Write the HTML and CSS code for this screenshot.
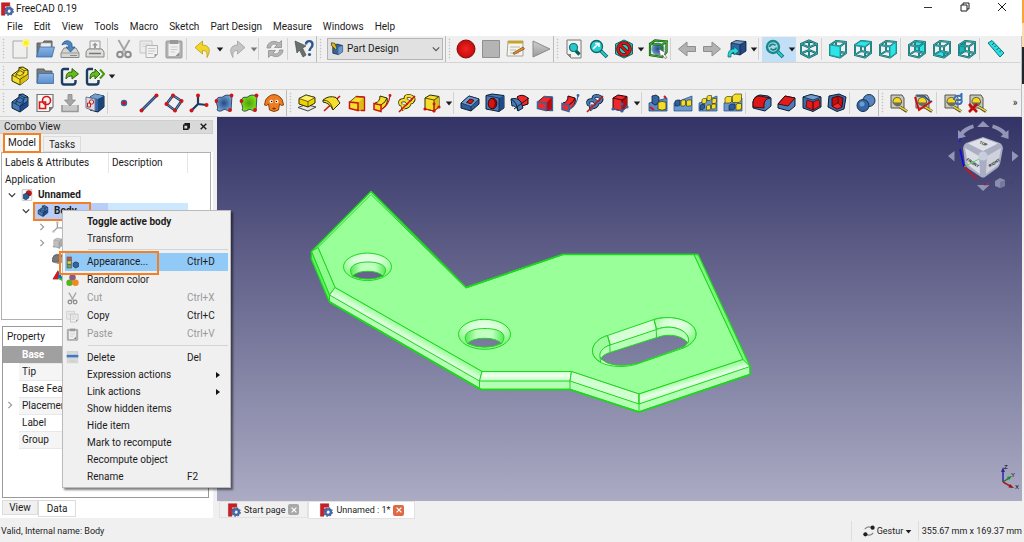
FILE: index.html
```html
<!DOCTYPE html>
<html lang="en">

<head>
  <meta charset="UTF-8">
  <meta name="viewport" content="width=device-width, initial-scale=1.0">
  <title>FreeCAD 0.19</title>
  <link rel="stylesheet" href="styles.css">
</head>

<body>
  <!-- Icon sprite -->
  <svg class="sprite" aria-hidden="true">
    <defs>
      <radialGradient id="g-red"><stop offset="0" stop-color="#f02424"/><stop offset="1" stop-color="#c80a0a"/></radialGradient>
      <linearGradient id="g-grey" x2="0" y2="1"><stop offset="0" stop-color="#d0d0d0"/><stop offset="1" stop-color="#9a9a9a"/></linearGradient>
      <linearGradient id="g-folder" x2="0" y2="1"><stop offset="0" stop-color="#8ab4e6"/><stop offset="1" stop-color="#5b8fcb"/></linearGradient>
      <radialGradient id="g-blue"><stop offset="0" stop-color="#204a87"/><stop offset="1" stop-color="#729fcf"/></radialGradient>
      <radialGradient id="g-green"><stop offset="0" stop-color="#4ea00a"/><stop offset="1" stop-color="#7ee01c"/></radialGradient>
    </defs>

    <symbol id="i-logo" viewBox="0 0 20 20">
      <path d="M2 1H14V6H7V8.500H11V13H7V19H2Z" fill="#cb1f24" stroke="#8e1014" stroke-width=".6"/>
      <circle cx="13" cy="13" r="4" fill="none" stroke="#4669a5" stroke-width="3.400"/>
      <circle cx="13" cy="13" r="5.800" fill="none" stroke="#4669a5" stroke-width="2" stroke-dasharray="2.300 2.255"/>
    </symbol>
    <symbol id="i-new" viewBox="0 0 20 20">
      <path d="M3 2H17V19H3Z" fill="#efefed" stroke="#a9aaa6"/>
      <circle cx="16" cy="4" r="4" fill="#fbf38c"/><circle cx="16" cy="4" r="2.200" fill="#ffee1c"/>
    </symbol>
    <symbol id="i-open" viewBox="0 0 20 20">
      <path d="M2 18L2 4H8L9 2H17V10" fill="#777" stroke="#5e5e5e"/>
      <path d="M6 4H16V10H5Z" fill="#eee" stroke="#999" stroke-width=".6"/>
      <path d="M4.500 8H19.500L17 18H1.500Z" fill="url(#g-folder)" stroke="#3d6da8" stroke-width=".8"/>
    </symbol>
    <symbol id="i-folder" viewBox="0 0 20 20">
      <path d="M2 17V3H9L10 5H17V9" fill="#7a7d80" stroke="#5d6063"/>
      <path d="M3.500 7.500H18.500V17.500H2Z" fill="url(#g-folder)" stroke="#3d6da8" stroke-width=".8"/>
    </symbol>
    <symbol id="i-save" viewBox="0 0 20 20">
      <path d="M4 9H16L19 14V18.500H1V14Z" fill="#d5d6d2" stroke="#888"/>
      <path d="M1 14H19" stroke="#999"/><path d="M10 16.500H17" stroke="#8a8a8a"/>
      <path d="M2 6C3 1 10 0 12 5V8H15L10.500 13L6 8H9C8.500 5 5 4 2 6Z" fill="#4b87c7" stroke="#29598f" stroke-width=".8"/>
    </symbol>
    <symbol id="i-print" viewBox="0 0 20 20">
      <path d="M5 2H15V10H5Z" fill="#f3f3f3" stroke="#999"/>
      <path d="M10 3.500L13 6.500H11V9H9V6.500H7Z" fill="#999"/>
      <path d="M3 10H17L19 13V18H1V13Z" fill="#dededb" stroke="#888"/><path d="M4 14.500H16" stroke="#777" stroke-width="1.500"/>
    </symbol>
    <symbol id="i-cut" viewBox="0 0 20 20">
      <path d="M4.500 1L11.500 13M15.500 1L8.500 13" stroke="#b9bab8" stroke-width="2.200" fill="none"/>
      <path d="M4.500 1L10 11M15.500 1L10 11" stroke="#8d8e8c" stroke-width=".7" fill="none"/>
      <circle cx="6" cy="15.500" r="2.800" fill="none" stroke="#8e8f8d" stroke-width="2"/>
      <circle cx="14" cy="15.500" r="2.800" fill="none" stroke="#8e8f8d" stroke-width="2"/>
    </symbol>
    <symbol id="i-copy" viewBox="0 0 20 20">
      <path d="M1 2H13V14H1Z" fill="#ececec" stroke="#c4c4c4"/><path d="M3 5H11M3 7.500H11" stroke="#d4d4d4"/>
      <path d="M7 6.500H18.500V15L15.500 18.500H7Z" fill="#f2f2f2" stroke="#b2b2b2"/>
      <path d="M9 9.500H16.500M9 12H16.500M9 14.500H14" stroke="#c8c8c8"/><path d="M15.500 18.500V15H18.500" fill="#999"/>
    </symbol>
    <symbol id="i-paste" viewBox="0 0 20 20">
      <rect x="2" y="2" width="16" height="17" rx="1" fill="#b2b2b2" stroke="#999"/>
      <path d="M4.500 4.500H15.500V17H4.500Z" fill="#f0f0f0"/><path d="M6 1H14V5H6Z" fill="#999"/>
      <path d="M6.500 8H13.500M6.500 10.500H13.500M6.500 13H11" stroke="#cdcdcd"/><path d="M15.500 13V17H11.500Z" fill="#909090"/>
    </symbol>
    <symbol id="i-undo" viewBox="0 0 20 20">
      <path d="M2 8.500L9.500 2V6C16 6 18.500 11 14 18.500C14.500 13 13.500 11.500 9.500 11.500V15Z" fill="var(--face)" stroke="var(--line)" stroke-width=".8" stroke-linejoin="round"/>
    </symbol>
    <symbol id="i-refresh" viewBox="0 0 20 20">
      <path d="M2 9C2 4 8 0 14 4L16.500 1.500V8.500H9.500L12 6C9 4 6 5.500 5.500 9Z" fill="#b4b4b4" stroke="#8f8f8f" stroke-width=".8"/>
      <path d="M18 11C18 16 12 20 6 16L3.500 18.500V11.500H10.500L8 14C11 16 14 14.500 14.500 11Z" fill="#b4b4b4" stroke="#8f8f8f" stroke-width=".8"/>
    </symbol>
    <symbol id="i-whats" viewBox="0 0 20 20">
      <path d="M1 2L12 7L8.500 9L12 16L9 18L5.500 11L3 14Z" fill="#6b716f" stroke="#474c4a" stroke-width=".7"/>
      <path d="M12 5.500C12 1 18.500 1 18.500 5.500C18.500 9 15.500 8.500 15.500 12" fill="none" stroke="#2b5791" stroke-width="2.400"/>
      <circle cx="15.500" cy="15.500" r="1.600" fill="#2b5791"/>
    </symbol>
    <symbol id="i-record" viewBox="0 0 20 20"><circle cx="10" cy="10" r="9" fill="url(#g-red)" stroke="#7e0c0c"/></symbol>
    <symbol id="i-stop" viewBox="0 0 20 20"><path d="M1.500 1.500H18.500V18.500H1.500Z" fill="#b4b4b4" stroke="#8f8f8f"/></symbol>
    <symbol id="i-note" viewBox="0 0 20 20">
      <path d="M2 2H17V17H1Z" fill="#f5f4ef" stroke="#a5a49c"/><path d="M2 2H17V4.500H2Z" fill="#c9a51c"/>
      <path d="M4 8H14M4 11H10M4 14H13" stroke="#b9b9b4"/>
      <path d="M7 14L17 8L18.500 10L8 15.500Z" fill="#f08a24" stroke="#6a4a1c" stroke-width=".7"/>
    </symbol>
    <symbol id="i-play" viewBox="0 0 20 20"><path d="M2 2L19 10L2 18Z" fill="url(#g-grey)" stroke="#8b8b8b"/></symbol>
    <symbol id="i-fitall" viewBox="0 0 20 20">
      <path d="M3 1H17V19H7L3 15Z" fill="#f3f3f1" stroke="#777"/><path d="M3 15H7V19Z" fill="#888"/>
      <path d="M11.500 11.500L15.500 15.500" stroke="#075b5d" stroke-width="3.200"/>
      <circle cx="9.500" cy="8.500" r="4" fill="#29c7ca" stroke="#0c7274" stroke-width="1.200"/>
    </symbol>
    <symbol id="i-zoomsel" viewBox="0 0 20 20">
      <path d="M11 11L18 18" stroke="#0b5d5f" stroke-width="3.600"/><path d="M12 12L17.500 17.500" stroke="#27c9cc" stroke-width="2"/>
      <circle cx="7.500" cy="7.500" r="6" fill="#2cced1" stroke="#0b6769" stroke-width="1.300"/>
      <path d="M4 10L9 5M6 4.500H10V8" stroke="#fff" stroke-width="1.500" fill="none"/>
    </symbol>
    <symbol id="i-sync" viewBox="0 0 20 20">
      <path d="M12 12L18 18" stroke="#0b7072" stroke-width="3.800"/><path d="M12.500 12.500L17.500 17.500" stroke="#27c9cc" stroke-width="2.200"/>
      <circle cx="8" cy="8" r="6" fill="#a5d8e6" stroke="#17898c" stroke-width="2.400"/>
      <path d="M4.500 8C5 5 9 4.500 10.500 6.500M11.500 8.500C10.500 11.500 7 11.500 5.500 9.500" stroke="#178083" stroke-width="1.600" fill="none"/>
    </symbol>
    <symbol id="i-nodraw" viewBox="0 0 20 20">
      <path d="M10 1L18.500 5V15L10 19L1.500 15V5Z" fill="#26c6c9" stroke="#0b6769"/>
      <circle cx="10" cy="10" r="6" fill="none" stroke="#5c0a0a" stroke-width="3.600"/><path d="M5.500 6L14.500 14" stroke="#5c0a0a" stroke-width="3.400"/>
      <circle cx="10" cy="10" r="6" fill="none" stroke="#d41818" stroke-width="2.200"/><path d="M5.500 6L14.500 14" stroke="#d41818" stroke-width="2"/>
    </symbol>
    <symbol id="i-bbox" viewBox="0 0 20 20">
      <circle cx="10" cy="10" r="6.500" fill="url(#g-blue)"/>
      <path d="M2 5L14 6V18L2 16Z M2 5L7 1.500L18.500 2.500L14 6M18.500 2.500V13L14 18" fill="none" stroke="#174f0e" stroke-width="2.200"/>
      <path d="M2 5L14 6V18L2 16Z M2 5L7 1.500L18.500 2.500L14 6M18.500 2.500V13L14 18" fill="none" stroke="#38b02c" stroke-width="1.100"/>
      <path d="M11 10L18 14L16 15L19 18.500L17 19.500L14.500 16L12.500 17.500Z" fill="#fff" stroke="#555" stroke-width=".6"/>
    </symbol>
    <symbol id="i-left" viewBox="0 0 20 20"><path d="M1.500 10L10 3V7.500H18.500V12.500H10V17Z" fill="#b2b2b2" stroke="#8e8e8e"/></symbol>
    <symbol id="i-right" viewBox="0 0 20 20"><path d="M18.500 10L10 3V7.500H1.500V12.500H10V17Z" fill="#b2b2b2" stroke="#8e8e8e"/></symbol>
    <symbol id="i-linkview" viewBox="0 0 20 20">
      <path d="M4 4L13 5.500V16L4 14Z" fill="#3465a4"/><path d="M4 4L9 1.500L19 2.500L13 5.500Z" fill="#729fcf"/><path d="M13 5.500L19 2.500V12L13 16Z" fill="#204a87"/>
      <path d="M4 14V4L9 1.500L19 2.500V12L13 16L4 14M4 4L13 5.500L19 2.500M13 5.500V16" fill="none" stroke="#0b1e33" stroke-width=".8"/>
      <path d="M1 18C1 12 3 10 7 10V7.500L12 12L7 16V13.500C4 13.500 4 15 4 18Z" fill="#2bd6d9" stroke="#075b5d" stroke-width=".7"/>
    </symbol>

    <!-- view cubes share one wire frame -->
    <symbol id="i-wire" viewBox="0 0 20 20">
      <g fill="none" stroke-linejoin="round">
        <path d="M2 6L12 7.500V18.500L2 16ZM2 6L8 2L18 3V14L12 18.500M12 7.500L18 3M8 2V12L2 16M8 12L18 14" stroke="#0f6062" stroke-width="2"/>
        <path d="M2 6L12 7.500V18.500L2 16ZM2 6L8 2L18 3V14L12 18.500M12 7.500L18 3M8 2V12L2 16M8 12L18 14" stroke="#3fb0b3" stroke-width=".9"/>
      </g>
    </symbol>
    <symbol id="i-front" viewBox="0 0 20 20"><use href="#i-wire"/><path d="M2 6L12 7.500V18.500L2 16Z" fill="#2fe3e6" stroke="#159fa2"/></symbol>
    <symbol id="i-top" viewBox="0 0 20 20"><use href="#i-wire"/><path d="M2 6L8 2L18 3L12 7.500Z" fill="#2fe3e6" stroke="#159fa2"/></symbol>
    <symbol id="i-rightview" viewBox="0 0 20 20"><use href="#i-wire"/><path d="M12 7.500L18 3V14L12 18.500Z" fill="#2fe3e6" stroke="#159fa2"/></symbol>
    <symbol id="i-rear" viewBox="0 0 20 20"><path d="M8 2L18 3V14L8 12Z" fill="#2fe3e6"/><use href="#i-wire"/></symbol>
    <symbol id="i-bottom" viewBox="0 0 20 20"><path d="M2 16L8 12L18 14L12 18.500Z" fill="#2fe3e6"/><use href="#i-wire"/></symbol>
    <symbol id="i-leftview" viewBox="0 0 20 20"><path d="M2 6L8 2V12L2 16Z" fill="#16b7ba"/><use href="#i-wire"/></symbol>
    <symbol id="i-iso" viewBox="0 0 20 20">
      <g fill="none" stroke-linejoin="round">
        <path d="M10 1.500L18 5V14.500L10 18.500L2 14.500V5ZM2 5L10 8.500L18 5M10 8.500V18.500M2 14.500L10 11L18 14.500M10 1.500V11" stroke="#0f6062" stroke-width="2"/>
        <path d="M10 1.500L18 5V14.500L10 18.500L2 14.500V5ZM2 5L10 8.500L18 5M10 8.500V18.500M2 14.500L10 11L18 14.500M10 1.500V11" stroke="#3fb0b3" stroke-width=".9"/>
      </g>
    </symbol>
    <symbol id="i-ruler" viewBox="0 0 20 20">
      <path d="M2 4L6 1.500L18 14L14 18Z" fill="#2edcdf" stroke="#0b7779"/><path d="M8 4L6 6M10 6.500L8.500 8M12.500 9L10.500 11M15 11.500L13.500 13" stroke="#0b6163"/>
    </symbol>

    <!-- solids: colours come from the add / sub classes -->
    <symbol id="i-stairs" viewBox="0 0 20 20">
      <path d="M2 9L9 4V1.500L13 1L18 4V13L10 19L2 15Z" fill="var(--face)" stroke="var(--line)"/>
      <path d="M10 12V19L18 13V8L14 10.500V7L10 12Z" fill="var(--shade)"/>
      <path d="M2 9L6 11V8L10 4.500M6 8L10 10L14 7L10 4.500M6 11L10 13.500V19M10 13.500L18 8M9 1.500L14 4.500L18 4M14 4.500V7" fill="none" stroke="var(--line)" stroke-width=".7"/>
    </symbol>
    <symbol id="i-link" viewBox="0 0 20 20">
      <path d="M9 3H4Q2 3 2 5V16Q2 18.500 4 18.500H13Q15.500 18.500 15.500 16V14" fill="none" stroke="#1c3c60" stroke-width="2.400"/>
      <path d="M6 13C6 7 8 6 12 6V2.500L18.500 8L12 13V10C9 10 8 10.500 6 13Z" fill="#63bd18" stroke="#24500a" stroke-width=".9"/>
    </symbol>
    <symbol id="i-links" viewBox="0 0 20 20">
      <path d="M8 3H4Q2 3 2 5V16Q2 18.500 4 18.500H11Q13.500 18.500 13.500 16V14" fill="none" stroke="#1c3c60" stroke-width="2.400"/>
      <path d="M5 13C5 7 7 6 10 6V3L15 8L10 13V10C8 10 7 10.500 5 13Z" fill="#63bd18" stroke="#24500a" stroke-width=".9"/>
      <path d="M15 3.500L19 8L15 12.500" fill="none" stroke="#4a9a10" stroke-width="2"/>
    </symbol>
    <symbol id="i-sketch" viewBox="0 0 20 20">
      <path d="M2 1.500H18V14L14 18.500H2Z" fill="#f6f6f4" stroke="#777" stroke-width="1.200"/><path d="M14 18.500V14H18Z" fill="#777"/>
      <circle cx="11.500" cy="7.500" r="4" fill="none" stroke="#d81616" stroke-width="1.600"/><path d="M4.500 9H10.500V15.500H4.500Z" fill="none" stroke="#d81616" stroke-width="1.600"/>
    </symbol>
    <symbol id="i-import" viewBox="0 0 20 20">
      <path d="M2 12V18.500H18V12" fill="#c9c9c9" stroke="#999" stroke-width="1.600"/>
      <path d="M8 1.500H12V7H15.500L10 13L4.500 7H8Z" fill="#a6a6a6" stroke="#8a8a8a" stroke-width=".8"/>
    </symbol>
    <symbol id="i-mapsketch" viewBox="0 0 20 20">
      <path d="M5 4L10 1L19 3V14L13 19L5 17Z" fill="#3465a4" stroke="#0b1e33"/><path d="M5 4L10 1L19 3L13 6Z" fill="#729fcf"/><path d="M13 6L19 3V14L13 19Z" fill="#1d4478"/>
      <path d="M1 4L10 6V18L1 15Z" fill="#d8dde6" stroke="#6b7b93"/>
      <circle cx="6.500" cy="9" r="2.200" fill="none" stroke="#d81616"/><path d="M2.500 10H5.500V14H2.500Z" fill="none" stroke="#d81616"/>
    </symbol>
    <symbol id="i-point" viewBox="0 0 20 20"><circle cx="10" cy="10" r="3.200" fill="#3465a4"/><circle cx="10" cy="10" r="1.900" fill="#d41414"/></symbol>
    <symbol id="i-line" viewBox="0 0 20 20">
      <path d="M2.500 17.500L17.500 2.500" stroke="#132c4b" stroke-width="2.600"/><path d="M2.500 17.500L17.500 2.500" stroke="#4c7db8" stroke-width="1.200"/>
      <circle cx="2.500" cy="17.500" r="2" fill="#d41414"/><circle cx="17.500" cy="2.500" r="2" fill="#d41414"/>
    </symbol>
    <symbol id="i-plane" viewBox="0 0 20 20">
      <path d="M2.500 11L9 2.500L17.500 8L11 17.500Z" fill="none" stroke="#132c4b" stroke-width="2.600"/><path d="M2.500 11L9 2.500L17.500 8L11 17.500Z" fill="none" stroke="#5c8cc4" stroke-width="1.200"/>
      <g fill="#d41414"><circle cx="2.500" cy="11" r="2"/><circle cx="9" cy="2.500" r="2"/><circle cx="17.500" cy="8" r="2"/><circle cx="11" cy="17.500" r="2"/></g>
    </symbol>
    <symbol id="i-cs" viewBox="0 0 20 20">
      <path d="M9 2.500V11L2.500 17.500M9 11L17.500 12" fill="none" stroke="var(--line)" stroke-width="2.200"/>
      <g fill="var(--face)"><circle cx="9" cy="2.500" r="2"/><circle cx="2.500" cy="17.500" r="2"/><circle cx="17.500" cy="12" r="2"/></g>
    </symbol>
    <symbol id="i-binder" viewBox="0 0 20 20">
      <path d="M2 7C5 2 7 6 10 3C13 1 15 3 18 2L17 18C13 19 12 15 9 17C6 19 4 18 3 17C5 13 1 10 2 7Z" fill="var(--face)" stroke="#173052" stroke-width=".8"/>
      <g fill="#d41414"><circle cx="17.500" cy="2.500" r="1.900"/><circle cx="2.500" cy="8" r="1.900"/><circle cx="16" cy="17" r="1.900"/></g>
    </symbol>
    <symbol id="i-clone" viewBox="0 0 20 20">
      <path d="M4 4Q10 -1 16 4Q19 6 19.500 12Q17.500 13.500 15.500 11L14.500 17Q10 20 5.500 17L4.500 11Q2.500 13.500 .5 12Q1 6 4 4Z" fill="#ee7d20" stroke="#7c3905" stroke-width=".9"/>
      <circle cx="7.300" cy="8.500" r="1.700" fill="#fff"/><circle cx="12.700" cy="8.500" r="1.700" fill="#fff"/><circle cx="7.600" cy="8.500" r=".8"/><circle cx="12.400" cy="8.500" r=".8"/>
      <path d="M8 15.500Q10 17.500 12 15.500L10 14.500Z" fill="#71320a"/>
    </symbol>
    <symbol id="i-pad" viewBox="0 0 20 20">
      <path d="M1 14.500L9 11.500L19 14L11 18Z" fill="#e6e6e6" stroke="#444"/>
      <path d="M2 5.500L9 2L18 4.500V10L11 14L2 11Z" fill="#edd400" stroke="#302b00"/><path d="M2 5.500L9 2L18 4.500L11 8.500Z" fill="#fdf06a" stroke="#302b00" stroke-width=".7"/><path d="M11 8.500V14" stroke="#302b00" stroke-width=".7"/>
    </symbol>
    <symbol id="i-revolve" viewBox="0 0 20 20">
      <path d="M2 18L18 3" stroke="#cc1212" stroke-width="1.600"/>
      <path d="M1 7Q7 2 14 4.500L18 10L11 17Q8 10 1 9Z" fill="var(--face)" stroke="var(--line)"/><path d="M1 7Q9 7 11 17" fill="none" stroke="var(--line)" stroke-width=".8"/>
    </symbol>
    <symbol id="i-groove" viewBox="0 0 20 20">
      <path d="M7 4Q12 0 18 5L18 11L12 13Z" fill="#ef2929" stroke="#280000"/>
      <path d="M1 6Q7 4 11 9L13 15L8 18Q6 12 2 13Z" fill="#4c7db8" stroke="#0b1e33"/><path d="M1 6Q7 9 8 18M4 16L19 5" fill="none" stroke="#0b1e33"/>
    </symbol>
    <symbol id="i-loft" viewBox="0 0 20 20">
      <path d="M2.500 9L9 3.500L17 4V17.500L11 17.500Z" fill="var(--face)" stroke="var(--line)" stroke-width=".8"/><path d="M11 10L17 4V17.500H11Z" fill="var(--shade)"/>
      <path d="M2.500 9L11 10V17.500L2.500 15.500Z" fill="var(--face)" stroke="var(--edge)" stroke-width="1.500"/><path d="M9 3.500L17.500 4V17.500H14" fill="none" stroke="var(--edge)" stroke-width="1.300"/>
    </symbol>
    <symbol id="i-pipe" viewBox="0 0 20 20">
      <path d="M3 10Q8 9 8 3L15 5Q17 11 9 17Z" fill="var(--face)" stroke="var(--line)"/><path d="M9 12Q14 9 15 5" fill="none" stroke="var(--line)"/>
      <path d="M2 10.500L9 12V18.500L2 16.500Z" fill="var(--face)" stroke="var(--edge)" stroke-width="1.500"/>
      <path d="M10 16Q17 12 18 2.500" fill="none" stroke="var(--edge)" stroke-width="1.200"/><circle cx="18" cy="2.500" r="1.400" fill="var(--edge)"/>
    </symbol>
    <symbol id="i-helix" viewBox="0 0 20 20">
      <path d="M4 12Q1 7 8 7Q15 9 11 13Q6 16 5 12M9 8Q7 2 13 3Q19 5 15 9Q11 11 9 8M7 17Q4 14 8 13" fill="none" stroke="var(--line)" stroke-width="3.800"/>
      <path d="M4 12Q1 7 8 7Q15 9 11 13Q6 16 5 12M9 8Q7 2 13 3Q19 5 15 9Q11 11 9 8M7 17Q4 14 8 13" fill="none" stroke="var(--face)" stroke-width="2.400"/>
      <path d="M2 19L18 3" stroke="#cc1212" stroke-width="1.600"/>
    </symbol>
    <symbol id="i-box" viewBox="0 0 20 20">
      <path d="M3 5L8 2L17 3.500V14L12 18L3 16Z" fill="var(--face)" stroke="var(--line)"/><path d="M12 7L17 3.500V14L12 18Z" fill="var(--shade)"/>
      <path d="M3 5L12 7L17 3.500M12 7V18" fill="none" stroke="var(--line)" stroke-width=".8"/><path d="M3 16L12 18L17 14M12 12V18" stroke="var(--edge)" fill="none"/>
      <g fill="var(--edge)"><circle cx="3" cy="16" r="1.600"/><circle cx="12" cy="18" r="1.600"/><circle cx="17" cy="14" r="1.600"/><circle cx="12" cy="11" r="1.400"/></g>
    </symbol>
    <symbol id="i-pocket" viewBox="0 0 20 20">
      <path d="M1 10L9 3L19 6V11L11 18L1 15Z" fill="#2f5d9b" stroke="#0b1e33"/><path d="M1 10L9 3L19 6L11 13.500Z" fill="#6d9bd0" stroke="#0b1e33" stroke-width=".7"/>
      <path d="M6.500 9.500L10 6L14 7.200L11 10.800Z" fill="#d41414" stroke="#280000" stroke-width=".8"/><path d="M11 13.500V18" stroke="#0b1e33" stroke-width=".7"/>
    </symbol>
    <symbol id="i-hole" viewBox="0 0 20 20">
      <path d="M1 2.500L7 1L19 2.500V15L14 18.500L1 16Z" fill="#4779b6" stroke="#0b1e33"/><path d="M14 5L19 2.500V15L14 18.500Z" fill="#204a87"/><path d="M1 2.500L14 5V18.500" fill="none" stroke="#0b1e33" stroke-width=".7"/>
      <ellipse cx="7.500" cy="10.500" rx="4.300" ry="5.300" fill="#d41414" stroke="#280000"/><path d="M7 5.500Q12 9 8 15.500Q12 14 11.500 10Q10.500 6 7 5.500Z" fill="#7c0505"/>
    </symbol>
    <symbol id="i-mirror" viewBox="0 0 20 20">
      <path d="M1 10L19 5V18H1Z" fill="#5b8ac2" stroke="#204a87" stroke-width=".8"/><path d="M4 3L8 2L11 4V10L7 12L4 10Z" fill="#3465a4" stroke="#0b1e33" stroke-width=".8"/>
      <path d="M2 14L6 17M16 3L18 5" stroke="#d41414" stroke-width="2"/><path d="M10 9.500Q14 7 18 9.500V16Q14 18.500 10 16Z" fill="#f3dc2a" stroke="#302b00" stroke-width=".7"/>
    </symbol>
    <symbol id="i-linear" viewBox="0 0 20 20">
      <path d="M1 10L19 3V18H1Z" fill="#6b98cf" stroke="#204a87" stroke-width=".7"/><path d="M2 8L4 7H7V12L5.500 13H2Z" fill="#2f5d9b" stroke="#0b1e33" stroke-width=".6"/>
      <path d="M8 8L9.500 7H12.500V12L11 13H8ZM13.500 8L15 7H18.500V12L17 13H13.500Z" fill="#f3dc2a" stroke="#302b00" stroke-width=".6"/>
    </symbol>
    <symbol id="i-polar" viewBox="0 0 20 20">
      <path d="M1 10L19 3V18H1Z" fill="#6b98cf" stroke="#204a87" stroke-width=".7"/><path d="M2 12.500L3.500 11.500H6.500V15L5 16.500H2Z" fill="#2f5d9b" stroke="#0b1e33" stroke-width=".6"/>
      <path d="M4 6.500L5.500 5.500H8.500V9L7 10.500H4ZM9 3.500L10.500 2.500H13.500V6L12 7.500H9ZM14 6.500L15.500 5.500H18.500V9L17 10.500H14ZM13.500 12L15 11H18V14.500L16.500 16H13.500ZM8.500 13L10 12H12.500V15.500L11.500 17H8.500Z" fill="#f3dc2a" stroke="#302b00" stroke-width=".6"/>
    </symbol>
    <symbol id="i-multi" viewBox="0 0 20 20">
      <path d="M1 10L19 5V18H1Z" fill="#6b98cf" stroke="#204a87" stroke-width=".7"/><path d="M6 12.500L8 11H12V15.500L10 17H6Z" fill="#2f5d9b" stroke="#0b1e33" stroke-width=".6"/>
      <path d="M2 5L4 3.500H8.500V8.500L7 10H2ZM9.500 3L12 1H18.500V7L16 9.500H9.500ZM13 12L14.500 10.500H18.500V15L17 17H13Z" fill="#f3dc2a" stroke="#302b00" stroke-width=".6"/>
    </symbol>
    <symbol id="i-fillet" viewBox="0 0 20 20">
      <path d="M1 9Q2 3 8 2L16 3L19 5V13L13 18L1 15Z" fill="#4c7db8" stroke="#0b1e33"/><path d="M1 9Q2 3 8 3L18 5Q12 6 12 12V15L1 14Z" fill="#de1616" stroke="#280000" stroke-width=".8"/>
    </symbol>
    <symbol id="i-chamfer" viewBox="0 0 20 20">
      <path d="M1 11L8 3L18 5V13L12 18L1 15Z" fill="#4c7db8" stroke="#0b1e33"/><path d="M1 11L8 3L18 5L11 13Z" fill="#e31b1b" stroke="#280000" stroke-width=".8"/>
    </symbol>
    <symbol id="i-draft" viewBox="0 0 20 20">
      <path d="M1 4L9 1.500L19 4V14L11 18.500L1 15Z" fill="#3c6cab" stroke="#0b1e33"/><path d="M1 4L9 1.500L19 4L11 7Z" fill="#729fcf" stroke="#0b1e33" stroke-width=".7"/>
      <path d="M5 7L11 9V17L4 14ZM11 9L17 6.500L18 13L11 17Z" fill="#e31b1b" stroke="#500" stroke-width=".7"/>
    </symbol>
    <symbol id="i-shell" viewBox="0 0 20 20">
      <path d="M2 3L12 1L19 4L17 16L10 18.500L1 14Z" fill="#3c6cab" stroke="#0b1e33"/><path d="M5 5L11 3L16 5L15 14L10 16L5 13Z" fill="#c01010" stroke="#280000" stroke-width=".8"/><path d="M5 13L11 10L15 14L10 16ZM11 3V10" fill="#ef2929" stroke="#500" stroke-width=".7"/>
    </symbol>
    <symbol id="i-boolean" viewBox="0 0 20 20"><circle cx="13" cy="7.500" r="6" fill="#5685bf" stroke="#173052"/><circle cx="7" cy="12.500" r="6" fill="#3465a4" stroke="#173052"/><circle cx="6" cy="11" r="2.500" fill="#6c9bd2"/></symbol>
    <symbol id="i-tape" viewBox="0 0 20 20">
      <path d="M2 2H13L15 5V15H2Z" fill="#c9c8bb" stroke="#55554f"/><path d="M4 8A4.300 4.300 0 0 1 12.500 8V10H4Z" fill="#f3d81f" stroke="#444" stroke-width=".8"/><path d="M4 10H12.500Q12 13.500 8 13.500Q5 13 4 10Z" fill="#6c6c60"/>
      <path d="M11 14L18 18.500" stroke="#43432a" stroke-width="3"/><path d="M11 14L18 18" stroke="#e6cf2d" stroke-width="1.500"/>
    </symbol>
    <symbol id="i-tape-tick" viewBox="0 0 20 20"><use href="#i-tape"/><path d="M1 4L5 17L18 8" fill="none" stroke="#cf1111" stroke-width="2"/><path d="M3 3H10L17 9" fill="none" stroke="#1f4c8f" stroke-width="1.500"/></symbol>
    <symbol id="i-tape-ref" viewBox="0 0 20 20"><use href="#i-tape"/><path d="M11 7Q11 2 17 3L18.500 1V7H13M19 8Q18 13 12 10" fill="none" stroke="#3a72b8" stroke-width="2"/></symbol>
    <symbol id="i-tape-x" viewBox="0 0 20 20"><use href="#i-tape"/><path d="M1 11L9 19M9 11L1 19" stroke="#c40d0d" stroke-width="2.600"/></symbol>
    <symbol id="i-workbench" viewBox="0 0 20 20">
      <path d="M4 6L10 3L18 5V14L12 18L4 16Z" fill="#3465a4" stroke="#0b1e33"/><path d="M12 8L18 5V14L12 18Z" fill="#6b98cf"/>
      <path d="M2 1L7 2L10 9L8 11L2 5Z" fill="#d9b51a" stroke="#3d3300"/>
    </symbol>
    <symbol id="i-doc" viewBox="0 0 20 20">
      <path d="M2 1H18V19H2Z" fill="#fafafa" stroke="#aaa"/><circle cx="13" cy="7" r="5" fill="#c01515"/><path d="M4 9L9 7L13 9V15L8 18L4 16Z" fill="#2d5c9c" stroke="#0b1e33"/>
    </symbol>
    <symbol id="i-appearance" viewBox="0 0 20 20">
      <path d="M1 1H9V19H1Z" fill="#666"/><path d="M2.500 2.500H7.500V6H2.500Z" fill="#e24a2f"/><path d="M2.500 8H7.500V12H2.500Z" fill="#e6cf2d"/><path d="M2.500 14H7.500V17.500H2.500Z" fill="#59b548"/>
      <path d="M11 11L15 9L19.500 11V16L15 18.500L11 16Z" fill="#34659f" stroke="#12294a"/>
    </symbol>
    <symbol id="i-balls" viewBox="0 0 20 20"><circle cx="10" cy="5.500" r="5" fill="#8a5a8c"/><circle cx="5.500" cy="13.500" r="5" fill="#5bb022"/><circle cx="14.500" cy="13.500" r="5" fill="#ef8a1d"/></symbol>
    <symbol id="i-delete" viewBox="0 0 20 20">
      <path d="M2 1H18V6H2Z" fill="#d9d9d9" stroke="#b0b0b0" stroke-width=".7"/><path d="M1 6H19V10H1Z" fill="#3e79c4"/><path d="M2 11H18V18H2Z" fill="#e2e2e2" stroke="#b5b5b5" stroke-width=".7"/><path d="M4 14H16M4 16H16" stroke="#c4c4c4"/>
    </symbol>
    <symbol id="i-nav" viewBox="0 0 20 20">
      <path d="M3 7Q7 1 14 4M17 13Q13 19 6 16" fill="none" stroke="#888" stroke-width="2"/>
      <circle cx="16" cy="4.500" r="3.500" fill="#1c2226"/><circle cx="4" cy="15.500" r="3.500" fill="#1c2226"/>
    </symbol>
    <symbol id="i-down" viewBox="0 0 10 10"><path d="M1 3H9L5 8Z" fill="currentColor"/></symbol>
    <symbol id="i-chev" viewBox="0 0 10 10"><path d="M1 3L5 7L9 3" fill="none" stroke="currentColor" stroke-width="1.500"/></symbol>
    <symbol id="i-x" viewBox="0 0 10 10"><path d="M1 1L9 9M9 1L1 9" fill="none" stroke="currentColor" stroke-width="var(--w, 1)"/></symbol>
    <symbol id="i-restore" viewBox="0 0 10 10"><path d="M1 3H7V9H1ZM3 3V1H9V7H7" fill="none" stroke="currentColor" stroke-width="var(--w, 1)"/></symbol>
  </svg>

  <div class="window">
    <header class="titlebar">
      <svg class="logo"><use href="#i-logo"/></svg>
      <h1>FreeCAD 0.19</h1>
      <button aria-label="Minimize"><svg viewBox="0 0 10 10"><path d="M1 5.500H9" stroke="#333"/></svg></button>
      <button aria-label="Restore"><svg><use href="#i-restore"/></svg></button>
      <button aria-label="Close"><svg><use href="#i-x"/></svg></button>
    </header>

    <nav class="menubar">
      <button>File</button>
      <button>Edit</button>
      <button>View</button>
      <button>Tools</button>
      <button>Macro</button>
      <button>Sketch</button>
      <button>Part Design</button>
      <button>Measure</button>
      <button>Windows</button>
      <button>Help</button>
    </nav>

    <div class="toolbar-row">
      <div class="toolbar">
        <button aria-label="New"><svg><use href="#i-new"/></svg></button>
        <button aria-label="Open"><svg><use href="#i-open"/></svg></button>
        <button aria-label="Save"><svg><use href="#i-save"/></svg></button>
        <button aria-label="Print"><svg><use href="#i-print"/></svg></button>
        <span class="sep"></span>
        <button aria-label="Cut"><svg><use href="#i-cut"/></svg></button>
        <button aria-label="Copy"><svg><use href="#i-copy"/></svg></button>
        <button aria-label="Paste"><svg><use href="#i-paste"/></svg></button>
        <span class="sep"></span>
        <button class="undo" aria-label="Undo"><svg><use href="#i-undo"/></svg></button>
        <button class="more" aria-label="Undo list"><svg><use href="#i-down"/></svg></button>
        <button class="redo" aria-label="Redo"><svg><use href="#i-undo"/></svg></button>
        <button class="more off" aria-label="Redo list"><svg><use href="#i-down"/></svg></button>
        <span class="sep"></span>
        <button aria-label="Refresh"><svg><use href="#i-refresh"/></svg></button>
        <span class="sep"></span>
        <button aria-label="What's this?"><svg><use href="#i-whats"/></svg></button>
      </div>
      <div class="toolbar">
        <div class="workbench">
          <svg class="workbench-icon"><use href="#i-workbench"/></svg>
          <select aria-label="Workbench">
            <option>Part Design</option>
          </select>
          <svg class="workbench-arrow"><use href="#i-chev"/></svg>
        </div>
      </div>
      <div class="toolbar">
        <button aria-label="Record macro"><svg><use href="#i-record"/></svg></button>
        <button aria-label="Stop macro"><svg><use href="#i-stop"/></svg></button>
        <button aria-label="Macros"><svg><use href="#i-note"/></svg></button>
        <button aria-label="Execute macro"><svg><use href="#i-play"/></svg></button>
      </div>
      <div class="toolbar last">
        <button aria-label="Fit all"><svg><use href="#i-fitall"/></svg></button>
        <button aria-label="Fit selection"><svg><use href="#i-zoomsel"/></svg></button>
        <button aria-label="Draw style"><svg><use href="#i-nodraw"/></svg></button>
        <button class="more" aria-label="Draw styles"><svg><use href="#i-down"/></svg></button>
        <button aria-label="Bounding box"><svg><use href="#i-bbox"/></svg></button>
        <span class="sep"></span>
        <button aria-label="Back"><svg><use href="#i-left"/></svg></button>
        <button aria-label="Forward"><svg><use href="#i-right"/></svg></button>
        <button aria-label="Go to linked object"><svg><use href="#i-linkview"/></svg></button>
        <button class="more" aria-label="Link navigation"><svg><use href="#i-down"/></svg></button>
        <span class="sep"></span>
        <button class="active" aria-label="Sync view"><svg><use href="#i-sync"/></svg></button>
        <button class="more active" aria-label="Sync options"><svg><use href="#i-down"/></svg></button>
        <button aria-label="Isometric"><svg><use href="#i-iso"/></svg></button>
        <span class="sep"></span>
        <button aria-label="Front"><svg><use href="#i-front"/></svg></button>
        <button aria-label="Top"><svg><use href="#i-top"/></svg></button>
        <button aria-label="Right"><svg><use href="#i-rightview"/></svg></button>
        <span class="sep"></span>
        <button aria-label="Rear"><svg><use href="#i-rear"/></svg></button>
        <button aria-label="Bottom"><svg><use href="#i-bottom"/></svg></button>
        <button aria-label="Left"><svg><use href="#i-leftview"/></svg></button>
        <span class="sep"></span>
        <button aria-label="Measure distance"><svg><use href="#i-ruler"/></svg></button>
      </div>
    </div>

    <div class="toolbar-row">
      <div class="toolbar last">
        <button class="add" aria-label="Create part"><svg><use href="#i-stairs"/></svg></button>
        <button aria-label="Create group"><svg><use href="#i-folder"/></svg></button>
        <button aria-label="Make link"><svg><use href="#i-link"/></svg></button>
        <button aria-label="Link actions"><svg><use href="#i-links"/></svg></button>
        <button class="more" aria-label="More link actions"><svg><use href="#i-down"/></svg></button>
      </div>
    </div>

    <div class="toolbar-row">
      <div class="toolbar">
        <button class="blue" aria-label="Create body"><svg><use href="#i-stairs"/></svg></button>
        <button aria-label="Create sketch"><svg><use href="#i-sketch"/></svg></button>
        <button aria-label="Edit sketch"><svg><use href="#i-import"/></svg></button>
        <button aria-label="Map sketch to face"><svg><use href="#i-mapsketch"/></svg></button>
        <span class="sep"></span>
        <button aria-label="Datum point"><svg><use href="#i-point"/></svg></button>
        <button aria-label="Datum line"><svg><use href="#i-line"/></svg></button>
        <button aria-label="Datum plane"><svg><use href="#i-plane"/></svg></button>
        <button class="cs" aria-label="Coordinate system"><svg><use href="#i-cs"/></svg></button>
        <button class="binder" aria-label="Shape binder"><svg><use href="#i-binder"/></svg></button>
        <button class="subbinder" aria-label="Sub-shape binder"><svg><use href="#i-binder"/></svg></button>
        <button aria-label="Clone"><svg><use href="#i-clone"/></svg></button>
      </div>
      <div class="toolbar">
        <button class="add" aria-label="Pad"><svg><use href="#i-pad"/></svg></button>
        <button class="add" aria-label="Revolution"><svg><use href="#i-revolve"/></svg></button>
        <button class="add" aria-label="Additive loft"><svg><use href="#i-loft"/></svg></button>
        <button class="add" aria-label="Additive pipe"><svg><use href="#i-pipe"/></svg></button>
        <button class="add" aria-label="Additive helix"><svg><use href="#i-helix"/></svg></button>
        <button class="add" aria-label="Additive box"><svg><use href="#i-box"/></svg></button>
        <button class="more" aria-label="Additive primitives"><svg><use href="#i-down"/></svg></button>
        <span class="sep"></span>
        <button aria-label="Pocket"><svg><use href="#i-pocket"/></svg></button>
        <button aria-label="Hole"><svg><use href="#i-hole"/></svg></button>
        <button aria-label="Groove"><svg><use href="#i-groove"/></svg></button>
        <button class="sub" aria-label="Subtractive loft"><svg><use href="#i-loft"/></svg></button>
        <button class="sub" aria-label="Subtractive pipe"><svg><use href="#i-pipe"/></svg></button>
        <button class="blue" aria-label="Subtractive helix"><svg><use href="#i-helix"/></svg></button>
        <button class="sub" aria-label="Subtractive box"><svg><use href="#i-box"/></svg></button>
        <button class="more" aria-label="Subtractive primitives"><svg><use href="#i-down"/></svg></button>
        <span class="sep"></span>
        <button aria-label="Mirrored"><svg><use href="#i-mirror"/></svg></button>
        <button aria-label="Linear pattern"><svg><use href="#i-linear"/></svg></button>
        <button aria-label="Polar pattern"><svg><use href="#i-polar"/></svg></button>
        <button aria-label="MultiTransform"><svg><use href="#i-multi"/></svg></button>
        <span class="sep"></span>
        <button aria-label="Fillet"><svg><use href="#i-fillet"/></svg></button>
        <button aria-label="Chamfer"><svg><use href="#i-chamfer"/></svg></button>
        <button aria-label="Draft"><svg><use href="#i-draft"/></svg></button>
        <button aria-label="Thickness"><svg><use href="#i-shell"/></svg></button>
        <span class="sep"></span>
        <button aria-label="Boolean"><svg><use href="#i-boolean"/></svg></button>
      </div>
      <div class="toolbar last">
        <button aria-label="Measure linear"><svg><use href="#i-tape"/></svg></button>
        <button aria-label="Measure angular"><svg><use href="#i-tape-tick"/></svg></button>
        <span class="sep"></span>
        <button aria-label="Refresh measurement"><svg><use href="#i-tape-ref"/></svg></button>
        <button aria-label="Clear measurement"><svg><use href="#i-tape-x"/></svg></button>
        <button class="overflow" aria-label="More tools">»</button>
      </div>
    </div>

    <main class="workspace">
      <aside class="combo">
        <div class="dock-title">
          <h2>Combo View</h2>
          <button aria-label="Float"><svg><use href="#i-restore"/></svg></button>
          <button aria-label="Close panel"><svg><use href="#i-x"/></svg></button>
        </div>
        <div class="tabs tabs-top">
          <button class="tab selected marked">Model</button>
          <button class="tab">Tasks</button>
        </div>

        <div class="combo-page">
          <div class="tree">
            <div class="tree-head"><span>Labels &amp; Attributes</span><span>Description</span></div>
            <div class="tree-row root">Application</div>
            <div class="tree-row level-1"><svg class="fold"><use href="#i-chev"/></svg><svg><use href="#i-doc"/></svg><b>Unnamed</b></div>
            <div class="tree-row level-2 picked"><svg class="fold"><use href="#i-chev"/></svg>
              <div class="picked-item blue marked"><svg><use href="#i-stairs"/></svg><b>Body</b></div>
            </div>
            <div class="tree-row level-3"><svg class="fold shut"><use href="#i-chev"/></svg><svg class="dim"><use href="#i-cs"/></svg></div>
            <div class="tree-row level-3"><svg class="fold shut"><use href="#i-chev"/></svg><svg class="dim"><use href="#i-box"/></svg></div>
            <div class="tree-row level-3"><span class="fold"></span><svg class="dim"><use href="#i-fillet"/></svg></div>
            <div class="tree-row level-3"><span class="fold"></span><svg viewBox="0 0 20 20"><path d="M1 17L10 2L19 17Z" fill="#2460c4"/><path d="M1 17L10 2L10 17Z" fill="#dd1717"/><path d="M11 15L18 19" stroke="#22cc22" stroke-width="3"/></svg></div>
          </div>

          <div class="props">
            <table>
              <thead>
                <tr><th colspan="2">Property</th></tr>
              </thead>
              <tbody>
                <tr class="group"><td></td><td>Base</td></tr>
                <tr><td></td><td>Tip</td></tr>
                <tr><td></td><td>Base Feature</td></tr>
                <tr><td><svg class="fold shut"><use href="#i-chev"/></svg></td><td>Placement</td></tr>
                <tr><td></td><td>Label</td></tr>
                <tr><td></td><td>Group</td></tr>
              </tbody>
            </table>
          </div>

          <div class="tabs tabs-bottom">
            <button class="tab">View</button>
            <button class="tab selected">Data</button>
          </div>
        </div>
      </aside>

      <section class="document">
        <!-- 3D view: part, navigation cube and axis cross -->
        <svg class="view3d" viewBox="217 117 805 384" preserveAspectRatio="xMidYMid meet">
          <defs>
            <linearGradient id="bevel" gradientUnits="userSpaceOnUse" x1="400" y1="325" x2="393" y2="337"><stop offset="0" stop-color="#9cff9c"/><stop offset=".5" stop-color="#dcffdc"/><stop offset="1" stop-color="#baffba"/></linearGradient>
            <linearGradient id="bevel-flat" x2="0" y2="1"><stop offset="0" stop-color="#c4ffc4"/><stop offset=".4" stop-color="#f2fff2"/><stop offset="1" stop-color="#baffba"/></linearGradient>
            <linearGradient id="bevel-r" gradientUnits="userSpaceOnUse" x1="694" y1="377" x2="697" y2="387"><stop offset="0" stop-color="#a8ffa8"/><stop offset=".5" stop-color="#e8ffe8"/><stop offset="1" stop-color="#baffba"/></linearGradient>
            <radialGradient id="rim" cx=".5" cy=".3" r=".6"><stop offset="0" stop-color="#eaffea"/><stop offset=".5" stop-color="#d2ffd2"/><stop offset="1" stop-color="#86f886"/></radialGradient>
            <linearGradient id="bore"><stop offset="0" stop-color="#54e854"/><stop offset=".3" stop-color="#c0ffc0"/><stop offset=".7" stop-color="#c0ffc0"/><stop offset="1" stop-color="#54e854"/></linearGradient>
            <linearGradient id="gap" gradientUnits="userSpaceOnUse" x1="0" y1="117" x2="0" y2="501"><stop offset="0" stop-color="#333366"/><stop offset="1" stop-color="#ababc4"/></linearGradient>
          </defs>

          <g stroke="#1fd61f" stroke-width="1" stroke-linejoin="round">
            <path d="M371 191.500L466 287.500L563 254.500H698L750 366.500V374.500L639 412L570 389.500H481L329.500 302L311.500 259V251.500Z" fill="#b4ffb4" stroke-width="1.600"/>
            <path d="M371 194.500L318 247.500L335 287.500L482 371.500H571.500L639 394L743 359.500L694 254.500H563L466 288Z" fill="#99ff99"/>
            <path d="M311.500 251.500L318 247.500L335 287.500L329.500 295Z" fill="#8ffb8f"/>
            <path d="M311.500 251.500L329.500 295V302L311.500 259Z" fill="#5bf35b"/>
            <path d="M335 287.500L482 371.500L479.500 381L329.500 295Z" fill="url(#bevel)"/>
            <path d="M482 371.500H571.500L570 381H479.500Z" fill="url(#bevel-flat)"/>
            <path d="M571.500 371.500L639 394V404L570 381Z" fill="#d0ffd0"/>
            <path d="M639 394L743 359.500Q749 361 750 366.500L639 404Z" fill="url(#bevel-r)"/>
            <path d="M694 254.500H698L750 366.500L743 359.500Z" fill="#7cf77c"/>
            <path d="M479.500 381V389.500M570 381V389.500M639 394V412" fill="none"/>
            <path d="M371 191.500L466 287.500L563 254.500H698M329.500 302L481 389.500H570L639 412L750 374.500" fill="none" stroke-width="1.600"/>

            <ellipse cx="367.500" cy="266.800" rx="24" ry="13.700" fill="url(#rim)"/>
            <path d="M352.500 276C346 266 357 262 368 262S391 266 383 276Z" fill="url(#bore)"/>
            <path d="M352.500 276A17 8.400 0 0 1 383 276A24 13.700 0 0 1 352.500 276Z" fill="url(#gap)"/>

            <ellipse cx="484.500" cy="334.300" rx="26" ry="15" fill="url(#rim)"/>
            <path d="M467.500 343.500C460 333 472 328.500 485 328.500S509 333 501.500 343.500Z" fill="url(#bore)"/>
            <path d="M467.500 343.500A19 9.500 0 0 1 501.500 343.500A26 15 0 0 1 467.500 343.500Z" fill="url(#gap)"/>

            <path d="M607.500 335.500L654 319.500C672 314 696 321 696 334C696 340 690 345.500 682 348.500L637 364C618 370 592.500 365 592.500 351C592.500 344 599 338 607.500 335.500Z" fill="#d6ffd6"/>
            <path d="M654 319.500C672 314 696 321 696 334C696 340 690 345.500 682 348.500L688 341C690 331 672 323 656.500 329.500Z" fill="url(#rim)"/>
            <path d="M607.500 335.500C599 338 592.500 344 592.500 351C592.500 355 596 360 601 362C598 355 603 347 610 345Z" fill="#9dfb9d"/>
            <path d="M601 359C597 352 604 347 610 345L656.500 329.500C672 323 692 331 688 343Z" fill="#b8ffb8"/>
            <path d="M601 359C602 356 605 354 610 352.500L658.500 337C670 333 682 336 687.500 342.500Q686 346 682 347.500L637 363.500Q612 369 601 359Z" fill="url(#gap)"/>
            <path d="M654 319.500Q657 327 656.500 337M607.500 335.500Q611 343 610 352" fill="none"/>
          </g>

          <g fill="#9295b6">
            <path d="M977 127L983 121L989.500 127ZM977 185H989.500L983 191ZM948 156L954.500 151V161.500ZM1018.500 156L1012 151V161.500Z"/>
            <path d="M973 124.500Q964 127 960.500 132L958 130V139L966 136.500L963.500 134.500Q967 130 974 128ZM993 124.500Q1002 127 1006 132L1008.500 130V139L1000.500 136.500L1003 134.500Q999 130 992 128Z"/>
          </g>
          <path d="M983 137L1000 143Q1003 145 1003 148L1000 164Q999 167 996 169L985 177Q983 178 981 177L969 169Q966 167 965 164L963 148Q963 145 966 143Z" fill="#a9aec3"/>
          <path d="M983 138L998 143.500L983 151L968 143.500Z" fill="#e0e1e8"/>
          <path d="M965 148L979 156L980 174L968 165Z" fill="#dcdde6"/>
          <path d="M1001 148L987 156L986 174L998 165Z" fill="#cfd1dd"/>
          <circle cx="983" cy="156" r="4.500" fill="#c9cddd"/>
          <g class="cube-text" text-anchor="middle">
            <text transform="translate(972 164) rotate(33)">FRONT</text>
            <text transform="translate(995 164) rotate(-33)">RIGHT</text>
            <text transform="translate(983 145) rotate(20)">TOP</text>
          </g>
          <path d="M964 167L960 149" stroke="#0b0be6" stroke-width="1.500"/>
          <path d="M964 167L979 159" stroke="#4fe04f"/>
          <path d="M964 167L977 179" stroke="#d61020" stroke-width="1.500"/>
          <text class="axis" x="958" y="142" fill="#1414e0">Z</text>
          <text class="axis" x="984" y="186" fill="#c01830">X</text>
          <path d="M995 181L1000 178L1005 180V186L1000 188L995 186Z" fill="#8b8eae"/><path d="M1000 182L1005 180V186L1000 188Z" fill="#77799c"/>
          <path d="M1008 181.500H1014L1011 185Z" fill="#44466c"/>

          <path d="M1003 482V470" stroke="#2a2a9c" stroke-width="1.500"/><path d="M1001 472L1003 467L1005 472Z" fill="#2a2a9c"/>
          <path d="M1003 482L1009 478" stroke="#1d7a2a" stroke-width="1.500"/><path d="M1007 477L1012 476L1009 480Z" fill="#1d8a2a"/>
          <path d="M1003 482L1010 486" stroke="#a52222" stroke-width="1.500"/><path d="M1010 484L1014 488L1008.500 487.500Z" fill="#8c1616"/>
          <g class="axis"><text x="1004" y="469">Z</text><text x="1011" y="477">Y</text><text x="1015" y="489">X</text></g>
        </svg>

        <div class="doc-tabs">
          <div class="doc-tab"><svg class="logo"><use href="#i-logo"/></svg><a href="#start">Start page</a><button aria-label="Close Start page"><svg><use href="#i-x"/></svg></button></div>
          <div class="doc-tab selected"><svg class="logo"><use href="#i-logo"/></svg><a href="#unnamed">Unnamed : 1*</a><button aria-label="Close Unnamed"><svg><use href="#i-x"/></svg></button></div>
        </div>
      </section>
    </main>

    <footer class="statusbar">
      <span class="status-text">Valid, Internal name: Body</span>
      <button class="nav-style"><svg class="nav-icon"><use href="#i-nav"/></svg><span>Gestur</span><svg class="nav-arrow"><use href="#i-down"/></svg></button>
      <span class="size">355.67 mm x 169.37 mm</span>
    </footer>
  </div>

  <!-- Context menu of the Body item -->
  <div class="context-menu" role="menu">
    <button role="menuitem" class="default"><span>Toggle active body</span></button>
    <button role="menuitem"><span>Transform</span></button>
    <hr>
    <button role="menuitem" class="with-icon hover"><svg><use href="#i-appearance"/></svg><span>Appearance...</span><kbd>Ctrl+D</kbd></button>
    <button role="menuitem" class="with-icon"><svg><use href="#i-balls"/></svg><span>Random color</span></button>
    <button role="menuitem" class="with-icon" disabled><svg><use href="#i-cut"/></svg><span>Cut</span><kbd>Ctrl+X</kbd></button>
    <button role="menuitem" class="with-icon"><svg><use href="#i-copy"/></svg><span>Copy</span><kbd>Ctrl+C</kbd></button>
    <button role="menuitem" class="with-icon" disabled><svg><use href="#i-paste"/></svg><span>Paste</span><kbd>Ctrl+V</kbd></button>
    <hr>
    <button role="menuitem"><svg><use href="#i-delete"/></svg><span>Delete</span><kbd>Del</kbd></button>
    <button role="menuitem" class="submenu"><span>Expression actions</span></button>
    <button role="menuitem" class="submenu"><span>Link actions</span></button>
    <button role="menuitem"><span>Show hidden items</span></button>
    <button role="menuitem"><span>Hide item</span></button>
    <button role="menuitem"><span>Mark to recompute</span></button>
    <button role="menuitem"><span>Recompute object</span></button>
    <button role="menuitem"><span>Rename</span><kbd>F2</kbd></button>
  </div>
</body>

</html>
```
FILE: styles.css
```css
* {
  box-sizing: border-box;
}

body {
  margin: 0;
  font-family: Roboto, "Noto Sans", sans-serif;
  font-size: 10px;
  line-height: 16px;
  color: #1c1c1c;
  background: linear-gradient(#fba336 23px, #fcdcae 23px, #fcdcae 47px, #1f262c 47px, #1f262c 84px, #f0f0f0 84px);
}

button,
select {
  font: inherit;
  color: inherit;
  margin: 0;
  padding: 0;
  border: none;
  background: none;
}

h1,
h2 {
  margin: 0;
  font-size: inherit;
  font-weight: normal;
}

.sprite {
  position: absolute;
  width: 0;
  height: 0;
}

.window {
  display: flex;
  flex-direction: column;
  height: 100vh;
  margin-right: 2px;
  background: #f0f0f0;
}

.logo {
  width: 14px;
  height: 14px;
  flex: none;
}

/* Icon colours */
.add {
  --face: #f5df2c;
  --shade: #d9bd12;
  --line: #302b00;
  --edge: #cc1212;
}

.sub {
  --face: #ef2929;
  --shade: #b80c0c;
  --line: #280000;
  --edge: #3465a4;
}

.blue {
  --face: #4779b6;
  --shade: #204a87;
  --line: #0b1e33;
}

.cs {
  --face: #d41414;
  --line: #1c3c60;
}

.binder {
  --face: url(#g-blue);
}

.subbinder {
  --face: url(#g-green);
}

.undo {
  --face: #f3d52a;
  --line: #b89a10;
}

.redo {
  --face: #c4c4c4;
  --line: #a0a0a0;
}

.dim {
  --face: #a5a5a5;
  --shade: #888;
  --line: #777;
  --edge: #777;
  filter: grayscale(1);
  opacity: .7;
}

/* Title and menu */
.titlebar {
  display: flex;
  align-items: center;
  height: 18px;
  padding-right: 2px;
  background: #fff;
}

.titlebar h1 {
  flex: 1;
  padding-left: 2px;
}

.titlebar button {
  width: 37px;
  height: 18px;
}

.titlebar button svg {
  width: 10px;
  height: 10px;
}

.menubar {
  display: flex;
  gap: 11px;
  height: 18px;
  padding-left: 7px;
  background: #fff;
}

/* Toolbars */
.toolbar-row {
  display: flex;
  height: 27px;
  border-bottom: 1px solid #d4d4d4;
}

.toolbar {
  display: flex;
  align-items: center;
  border-right: 1px solid #bbb;
}

.toolbar::before {
  content: "";
  width: 7px;
  height: 22px;
  background: radial-gradient(circle, #c2c2c2 35%, transparent 50%) 2px 0 / 3px 3px repeat-y;
}

.toolbar.last {
  flex: 1;
}

.toolbar button {
  display: flex;
  align-items: center;
  justify-content: center;
  width: 25px;
  height: 25px;
}

.toolbar button svg {
  width: 20px;
  height: 20px;
}

.toolbar .more {
  width: 9px;
}

.toolbar .more svg {
  width: 8px;
  height: 8px;
}

.toolbar .off {
  color: #777;
}

.toolbar .active {
  background: #c2dff6;
}

.redo svg {
  transform: scaleX(-1);
}

.sep {
  width: 4px;
  height: 22px;
  border-left: 1px solid #d2d2d2;
}

.toolbar .overflow {
  width: 12px;
  margin-left: auto;
}

.workbench {
  position: relative;
  width: 116px;
  margin: 0 2px 0 3px;
}

.workbench select {
  appearance: none;
  display: block;
  width: 100%;
  height: 22px;
  padding-left: 19px;
  border: 1px solid #b4b4b4;
  background: #e1e1e1;
}

.workbench-icon {
  position: absolute;
  left: 3px;
  top: 4px;
  width: 14px;
  height: 14px;
}

.workbench-arrow {
  position: absolute;
  right: 3px;
  top: 7px;
  width: 8px;
  height: 8px;
  color: #555;
}

/* Combo view */
.workspace {
  display: flex;
  flex: 1;
  min-height: 0;
}

.combo {
  display: flex;
  flex-direction: column;
  flex: none;
  width: 217px;
  padding: 3px 4px 2px 0;
}

.dock-title {
  display: flex;
  align-items: center;
  height: 14px;
  padding-left: 4px;
  background: #d9d9d9;
  border: 1px solid #cfcfcf;
  border-left: none;
}

.dock-title h2 {
  flex: 1;
}

.dock-title button {
  width: 17px;
  height: 12px;
  line-height: 10px;
}

.dock-title svg {
  width: 7px;
  height: 7px;
  --w: 2;
}

.tabs {
  display: flex;
}

.tab {
  border: 1px solid #dcdcdc;
}

.tab.selected {
  background: #fff;
}

.tabs-top {
  align-items: flex-end;
  height: 18px;
  padding-left: 4px;
}

.tabs-top .tab {
  width: 38px;
  height: 16px;
}

.tabs-top .selected {
  width: 36px;
  height: 18px;
  margin-right: 3px;
}

/* Orange frame that points out the step */
.marked {
  outline: 2px solid #f58024;
  outline-offset: -1px;
  z-index: 1;
}

.combo-page {
  display: flex;
  flex-direction: column;
  flex: 1;
  min-height: 0;
  padding: 0 2px 0 1px;
  background: #fff;
}

.tree {
  flex: 1;
  min-height: 0;
  border: 1px solid #b0b0b0;
}

.tree-head {
  display: flex;
  height: 20px;
  line-height: 20px;
}

.tree-head span {
  padding-left: 3px;
  width: 106px;
}

.tree-head span + span {
  width: 80px;
  border-left: 1px solid #e5e5e5;
  border-right: 1px solid #e5e5e5;
}

.tree-row {
  display: flex;
  align-items: center;
  gap: 5px;
  height: 16px;
}

.tree-row svg {
  width: 12px;
  height: 12px;
  flex: none;
}

.tree-row .fold,
.props .fold {
  width: 8px;
  height: 8px;
  flex: none;
  color: #333;
}

.tree-row .shut,
.props .shut {
  transform: rotate(-90deg);
  color: #999;
}

.tree .root {
  height: 14px;
  padding-left: 3px;
}

.level-1 {
  padding-left: 6px;
}

.level-2 {
  gap: 4px;
  padding-left: 20px;
}

.level-3 {
  padding-left: 36px;
  gap: 6px;
}

.picked {
  margin-right: 22px;
  background: linear-gradient(90deg, transparent 33px, #b8cdf8 33px, #b8cdf8 106px, #cce8ff 106px);
}

.picked-item {
  display: flex;
  align-items: center;
  gap: 5px;
  width: 56px;
  height: 17px;
  padding-left: 3px;
}

.props {
  flex: none;
  height: 172px;
  margin: 6px 2px 0 1px;
  border: 1px solid #999;
  overflow: hidden;
}

.props table {
  width: 100%;
  border-collapse: collapse;
}

.props th {
  height: 19px;
  padding: 0 0 0 4px;
  font-weight: normal;
  text-align: left;
}

.props td {
  height: 17px;
  padding: 0 0 0 3px;
  line-height: 15px;
  border-bottom: 1px solid #e8e8e8;
}

.props td:first-child {
  width: 16px;
  border: none;
}

.props tr:nth-child(even) td + td {
  background: #f5f5f5;
}

.props .group td {
  color: #fff;
  font-weight: bold;
  background: #a0a0a0;
}

.tabs-bottom {
  height: 20px;
  padding: 2px 0 0 1px;
}

.tabs-bottom .tab {
  width: 36px;
  height: 15px;
  line-height: 13px;
  background: #f0f0f0;
}

.tabs-bottom .selected {
  height: 17px;
  width: 38px;
  background: #fff;
}

/* Document area */
.document {
  display: flex;
  flex-direction: column;
  flex: 1;
  min-width: 0;
}

.view3d {
  display: block;
  flex: 1;
  width: 100%;
  min-height: 0;
  background: linear-gradient(#333366, #ababc4);
}

.cube-text {
  font: bold 4px "Liberation Sans", sans-serif;
  fill: #111;
}

.axis {
  font: 6px "Liberation Sans", sans-serif;
}

.doc-tabs {
  display: flex;
  flex: none;
  height: 19px;
  padding-left: 2px;
  font-size: 9px;
}

.doc-tab {
  display: flex;
  align-items: center;
  height: 17px;
  padding: 0 8px 0 7px;
  gap: 3px;
  border: 1px solid #e2e2e2;
}

.doc-tab.selected {
  height: 18px;
  padding: 0 10px;
  background: #fff;
}

.doc-tab a {
  color: inherit;
  text-decoration: none;
}

.doc-tab button {
  display: flex;
  align-items: center;
  justify-content: center;
  width: 11px;
  height: 11px;
  border-radius: 2px;
  background: #a8a8a8;
  color: #fff;
}

.doc-tab.selected button {
  background: #dd6a45;
}

.doc-tab button svg {
  width: 6px;
  height: 6px;
  --w: 2;
}

/* Status bar */
.statusbar {
  display: flex;
  align-items: center;
  flex: none;
  height: 22px;
  padding-left: 1px;
  font-size: 9px;
}

.status-text {
  flex: 1;
}

.nav-style {
  display: flex;
  align-items: center;
  gap: 2px;
  width: 67px;
  height: 20px;
  padding-left: 11px;
  border-left: 1px solid #ddd;
}

.nav-icon {
  width: 12px;
  height: 12px;
}

.nav-arrow {
  width: 7px;
  height: 7px;
}

.size {
  padding-left: 3px;
  line-height: 20px;
  border-left: 1px solid #ddd;
  white-space: nowrap;
}

/* Context menu */
.context-menu {
  position: absolute;
  left: 62px;
  top: 210px;
  width: 169px;
  padding: 2px;
  background: #f0f0f0;
  border: 1px solid #bbb;
  box-shadow: 2px 2px 2px rgba(0, 0, 0, .5);
  z-index: 2;
}

.context-menu button {
  display: grid;
  grid-template-columns: 22px 100px 1fr;
  align-items: center;
  width: 100%;
  height: 17px;
  text-align: left;
  white-space: nowrap;
}

.context-menu .with-icon {
  height: 18px;
}

.context-menu svg {
  width: 13px;
  height: 13px;
  margin-left: 1px;
}

.context-menu span {
  grid-column: 2;
}

.context-menu kbd {
  font: inherit;
}

.context-menu .default {
  font-weight: bold;
}

.context-menu :disabled {
  color: #9a9a9a;
}

.context-menu .hover {
  position: relative;
  background: #91c9f7;
}

.context-menu .hover::after {
  content: "";
  position: absolute;
  left: -6px;
  top: -2px;
  width: 96px;
  height: 20px;
  border: 2px solid #f58024;
}

.context-menu .submenu::after {
  content: "";
  justify-self: end;
  grid-column: 3;
  margin-right: 8px;
  border: 3px solid transparent;
  border-left: 4px solid #111;
  border-right: none;
}

.context-menu hr {
  height: 1px;
  margin: 2px 0 3px 23px;
  border: none;
  background: #d4d4d4;
}
```
